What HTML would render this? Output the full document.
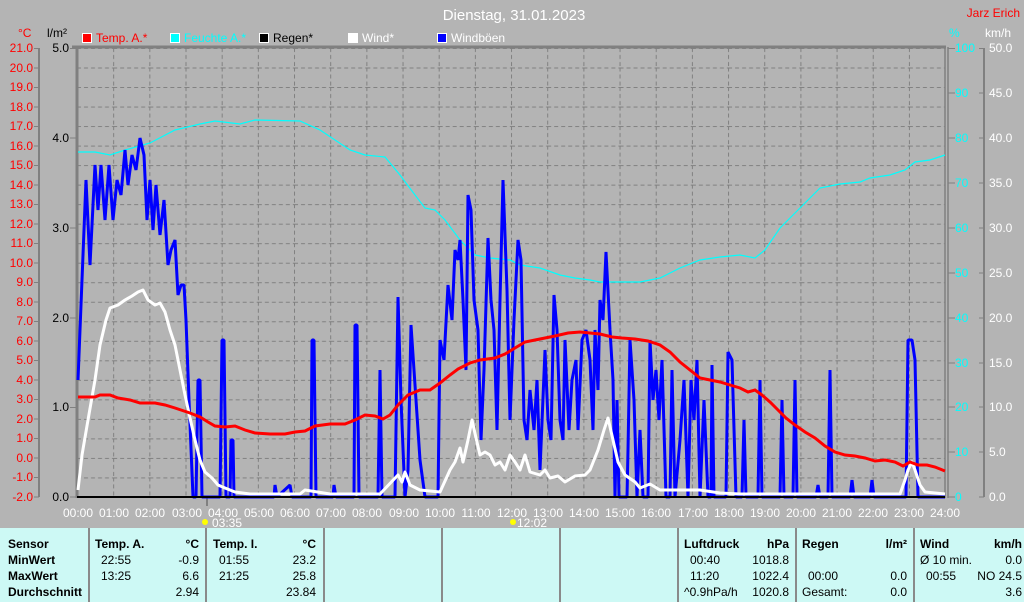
<!DOCTYPE html>
<html><head><meta charset="utf-8"><style>
body{margin:0;width:1024px;height:602px;overflow:hidden;background:#b4b4b4;font-family:"Liberation Sans",sans-serif}
svg{position:absolute;left:0;top:0}
.tb{position:absolute;left:0;top:528px;width:1024px;height:74px;background:#cdf9f5;font-size:12px;color:#000}
.c{position:absolute;top:0;height:74px;border-left:2px solid #8a8a8a}
.r{position:absolute;white-space:nowrap}
b{font-weight:bold}
</style></head><body>
<svg width="1024" height="528" viewBox="0 0 1024 528" font-family="Liberation Sans" font-size="12">
<defs>
<pattern id="g" x="77" y="48" width="36.17" height="19.52" patternUnits="userSpaceOnUse">
<line x1="0.5" y1="0" x2="0.5" y2="19.52" stroke="#808080" stroke-dasharray="4,3"/>
<line x1="0" y1="0.5" x2="36.17" y2="0.5" stroke="#808080" stroke-dasharray="4,3"/>
</pattern>
</defs>
<text x="514" y="20" fill="#fff" font-size="15" text-anchor="middle">Dienstag, 31.01.2023</text>
<text x="1020" y="17" fill="#f00" text-anchor="end">Jarz Erich</text>
<text x="18" y="37" fill="#f00">°C</text>
<text x="47" y="37" fill="#000">l/m²</text>
<text x="949" y="37" fill="#0ff">%</text>
<text x="985" y="37" fill="#fff">km/h</text>
<g font-size="12">
<rect x="82.5" y="33.5" width="9" height="9" fill="#f00" stroke="#fff"/><text x="96" y="42" fill="#f00">Temp. A.*</text>
<rect x="170.5" y="33.5" width="9" height="9" fill="#0ff" stroke="#fff"/><text x="184" y="42" fill="#0ff">Feuchte A.*</text>
<rect x="259.5" y="33.5" width="9" height="9" fill="#000" stroke="#fff"/><text x="273" y="42" fill="#000">Regen*</text>
<rect x="348.5" y="33.5" width="9" height="9" fill="#fff" stroke="#fff"/><text x="362" y="42" fill="#fff">Wind*</text>
<rect x="437.5" y="33.5" width="9" height="9" fill="#00f" stroke="#fff"/><text x="451" y="42" fill="#fff">Windböen</text>
</g>
<rect x="77" y="48" width="868" height="449" fill="url(#g)"/>
<line x1="39" y1="48" x2="39" y2="497" stroke="#808080" stroke-width="2"/>
<g fill="#f00" text-anchor="end">
<text x="33" y="52">21.0</text><text x="33" y="72">20.0</text><text x="33" y="91">19.0</text><text x="33" y="111">18.0</text><text x="33" y="130">17.0</text><text x="33" y="150">16.0</text><text x="33" y="169">15.0</text><text x="33" y="189">14.0</text><text x="33" y="208">13.0</text><text x="33" y="228">12.0</text><text x="33" y="247">11.0</text><text x="33" y="267">10.0</text><text x="33" y="286">9.0</text><text x="33" y="306">8.0</text><text x="33" y="325">7.0</text><text x="33" y="345">6.0</text><text x="33" y="364">5.0</text><text x="33" y="384">4.0</text><text x="33" y="403">3.0</text><text x="33" y="423">2.0</text><text x="33" y="442">1.0</text><text x="33" y="462">0.0</text><text x="33" y="481">-1.0</text><text x="33" y="501">-2.0</text>
</g>
<g stroke="#808080"><path d="M34 48.5h5M34 68h5M34 87.5h5M34 107h5M34 126.5h5M34 146h5M34 165.5h5M34 185h5M34 204.5h5M34 224h5M34 243.5h5M34 263h5M34 282.5h5M34 302h5M34 321.5h5M34 341h5M34 360.5h5M34 380h5M34 399.5h5M34 419h5M34 438.5h5M34 458h5M34 477.5h5M34 497h5"/>
<path d="M70 48.5h7M70 138h7M70 228h7M70 318h7M70 407.5h7M70 497h7"/></g>
<g fill="#000" text-anchor="end"><text x="69" y="52">5.0</text><text x="69" y="142">4.0</text><text x="69" y="232">3.0</text><text x="69" y="322">2.0</text><text x="69" y="411">1.0</text><text x="69" y="501">0.0</text></g>
<line x1="72" y1="47" x2="946" y2="47" stroke="#808080" stroke-width="3"/>
<line x1="77" y1="47" x2="77" y2="498" stroke="#808080" stroke-width="3"/>
<line x1="945" y1="47" x2="945" y2="498" stroke="#808080" stroke-width="1.5"/>
<line x1="948" y1="47" x2="948" y2="498" stroke="#808080" stroke-width="1.5"/>
<line x1="984" y1="48" x2="984" y2="497" stroke="#808080" stroke-width="2"/>
<g stroke="#808080"><path d="M948 48.5h7M948 93h7M948 138h7M948 183h7M948 228h7M948 273h7M948 318h7M948 363h7M948 407h7M948 452h7M948 497h7"/>
<path d="M979 48.5h5M979 93h5M979 138h5M979 183h5M979 228h5M979 273h5M979 318h5M979 363h5M979 407h5M979 452h5M979 497h5"/></g>
<g fill="#0ff"><text x="955" y="52">100</text><text x="955" y="97">90</text><text x="955" y="142">80</text><text x="955" y="187">70</text><text x="955" y="232">60</text><text x="955" y="277">50</text><text x="955" y="322">40</text><text x="955" y="367">30</text><text x="955" y="411">20</text><text x="955" y="456">10</text><text x="955" y="501">0</text></g>
<g fill="#fff"><text x="989" y="52">50.0</text><text x="989" y="97">45.0</text><text x="989" y="142">40.0</text><text x="989" y="187">35.0</text><text x="989" y="232">30.0</text><text x="989" y="277">25.0</text><text x="989" y="322">20.0</text><text x="989" y="367">15.0</text><text x="989" y="411">10.0</text><text x="989" y="456">5.0</text><text x="989" y="501">0.0</text></g>
<g fill="#fff" text-anchor="middle"><text x="78" y="517">00:00</text><text x="114" y="517">01:00</text><text x="150" y="517">02:00</text><text x="187" y="517">03:00</text><text x="223" y="517">04:00</text><text x="259" y="517">05:00</text><text x="295" y="517">06:00</text><text x="331" y="517">07:00</text><text x="367" y="517">08:00</text><text x="404" y="517">09:00</text><text x="440" y="517">10:00</text><text x="476" y="517">11:00</text><text x="512" y="517">12:00</text><text x="548" y="517">13:00</text><text x="584" y="517">14:00</text><text x="620" y="517">15:00</text><text x="656" y="517">16:00</text><text x="693" y="517">17:00</text><text x="729" y="517">18:00</text><text x="765" y="517">19:00</text><text x="801" y="517">20:00</text><text x="837" y="517">21:00</text><text x="873" y="517">22:00</text><text x="909" y="517">23:00</text><text x="945" y="517">24:00</text></g>
<line x1="207" y1="498" x2="207" y2="506" stroke="#808080" stroke-width="2"/>
<circle cx="205" cy="522" r="3" fill="#ff0"/><text x="212" y="527" fill="#fff">03:35</text>
<circle cx="513" cy="522" r="3" fill="#ff0"/><text x="517" y="527" fill="#fff">12:02</text>
<polyline fill="none" stroke="#0ff" stroke-width="1.2" points="78,152 95,152 110,155 125,150 150,143 175,130 200,124 215,121 240,124 255,120 300,121 320,130 350,150 365,155 385,157 400,175 415,195 425,208 435,210 445,220 460,240 475,255 490,258 510,260 520,265 540,268 560,275 575,278 590,280 600,282 620,282 640,282 660,278 680,268 700,260 720,257 740,255 755,258 765,250 780,228 800,208 820,188 840,184 860,182 870,178 890,175 905,170 915,162 930,160 945,155"/>
<polyline fill="none" stroke="#00f" stroke-width="3" stroke-linejoin="bevel" points="78,380 82,280 86,180 90,265 95,165 98,210 101,165 105,220 109,165 113,220 117,180 121,195 125,150 128,185 132,155 136,170 140,138 144,155 147,220 150,180 153,230 156,185 160,235 164,200 168,265 171,250 175,240 178,295 181,285 184,285 186,320 189,400 193,497 196,497 198,380 200,380 202,497 220,497 222,340 224,340 226,497 230,497 231,440 233,440 234,497 274,497 275,485 277,497 290,485 292,497 311,497 312,340 314,340 316,497 333,497 334,485 336,497 354,497 355,325 357,325 359,497 378,497 380,370 382,497 395,497 398,297 401,400 405,497 408,470 411,325 416,400 420,460 425,497 438,497 440,340 444,360 448,285 452,320 455,250 458,260 460,240 463,300 466,370 468,195 471,210 474,300 478,330 481,440 484,370 488,238 491,300 494,330 497,430 500,300 503,180 507,290 510,420 514,320 518,240 521,260 524,420 527,440 530,390 534,430 537,380 540,470 545,350 548,420 551,440 554,295 557,330 560,420 563,440 565,340 569,430 572,380 576,360 578,430 582,340 586,330 590,360 593,430 595,330 598,390 600,300 603,320 606,252 610,330 613,380 615,497 617,400 619,497 627,497 628,450 630,340 634,400 637,497 640,430 643,497 648,497 650,340 653,400 656,370 659,420 662,360 666,497 670,497 672,370 675,497 680,440 684,380 688,497 691,380 694,420 697,360 700,497 704,400 708,497 711,497 712,365 714,497 726,497 728,352 732,360 736,497 742,497 744,420 746,497 758,497 760,380 762,497 780,497 782,400 784,497 793,497 795,380 797,497 816,497 818,485 820,497 828,497 830,370 832,497 850,497 852,480 854,497 870,497 872,480 874,497 906,497 908,340 912,340 915,360 918,497 945,497"/>
<polyline fill="none" stroke="#fff" stroke-width="3" stroke-linejoin="round" points="78,490 82,455 88,420 95,380 100,345 106,320 110,308 118,305 125,300 132,296 138,292 143,290 148,300 155,305 160,303 165,312 170,330 175,345 180,370 185,395 190,418 195,440 200,460 205,472 212,478 218,485 225,488 235,492 250,494 300,494 305,490 330,494 380,494 398,475 402,482 405,472 410,485 420,490 440,492 450,470 455,462 460,448 463,462 468,440 472,420 476,438 480,455 485,452 490,455 495,465 500,462 505,470 510,455 515,462 520,470 525,455 530,472 540,475 545,470 550,478 558,476 565,482 575,476 585,475 590,470 598,450 604,430 608,418 613,440 618,462 625,475 635,482 640,488 650,484 660,490 680,490 700,490 720,493 740,494 760,494 800,494 900,494 905,480 908,470 912,462 915,470 920,485 925,492 945,494"/>
<polyline fill="none" stroke="#f00" stroke-width="3" points="78,397 95,397 100,395 110,395 118,398 130,400 140,403 155,403 165,405 175,408 190,413 200,417 208,422 215,426 225,427 235,426 245,430 255,433 270,434 285,434 295,432 305,431 315,426 330,424 345,424 355,420 365,415 375,416 383,419 390,415 398,405 408,395 420,390 430,390 440,383 450,375 458,369 470,363 480,360 495,358 505,354 515,348 525,342 535,340 545,338 555,336 568,333 580,332 590,333 600,334 612,337 622,338 635,339 648,341 660,345 670,352 680,362 690,370 700,378 710,380 720,382 730,385 740,388 748,392 755,390 762,395 770,402 778,410 786,418 795,425 805,432 815,438 825,446 835,452 845,455 855,456 865,458 875,461 885,460 895,462 903,466 910,462 918,465 927,465 935,467 945,471"/>
<line x1="77" y1="497" x2="945" y2="497" stroke="#000" stroke-width="2"/>
</svg>
<div class="tb">
<div class="c" style="left:88px"></div><div class="c" style="left:205px"></div><div class="c" style="left:323px"></div><div class="c" style="left:441px"></div><div class="c" style="left:559px"></div><div class="c" style="left:677px"></div><div class="c" style="left:795px"></div><div class="c" style="left:913px"></div>
<div class="r" style="left:8px;top:9px"><b>Sensor</b></div>
<div class="r" style="left:8px;top:25px"><b>MinWert</b></div>
<div class="r" style="left:8px;top:41px"><b>MaxWert</b></div>
<div class="r" style="left:8px;top:57px"><b>Durchschnitt</b></div>
<div class="r" style="left:95px;top:9px"><b>Temp. A.</b></div><div class="r" style="right:825px;top:9px"><b>°C</b></div>
<div class="r" style="left:101px;top:25px">22:55</div><div class="r" style="right:825px;top:25px">-0.9</div>
<div class="r" style="left:101px;top:41px">13:25</div><div class="r" style="right:825px;top:41px">6.6</div>
<div class="r" style="right:825px;top:57px">2.94</div>
<div class="r" style="left:213px;top:9px"><b>Temp. I.</b></div><div class="r" style="right:708px;top:9px"><b>°C</b></div>
<div class="r" style="left:219px;top:25px">01:55</div><div class="r" style="right:708px;top:25px">23.2</div>
<div class="r" style="left:219px;top:41px">21:25</div><div class="r" style="right:708px;top:41px">25.8</div>
<div class="r" style="right:708px;top:57px">23.84</div>
<div class="r" style="left:684px;top:9px"><b>Luftdruck</b></div><div class="r" style="right:235px;top:9px"><b>hPa</b></div>
<div class="r" style="left:690px;top:25px">00:40</div><div class="r" style="right:235px;top:25px">1018.8</div>
<div class="r" style="left:690px;top:41px">11:20</div><div class="r" style="right:235px;top:41px">1022.4</div>
<div class="r" style="left:684px;top:57px">^0.9hPa/h</div><div class="r" style="right:235px;top:57px">1020.8</div>
<div class="r" style="left:802px;top:9px"><b>Regen</b></div><div class="r" style="right:117px;top:9px"><b>l/m²</b></div>
<div class="r" style="left:808px;top:41px">00:00</div><div class="r" style="right:117px;top:41px">0.0</div>
<div class="r" style="left:802px;top:57px">Gesamt:</div><div class="r" style="right:117px;top:57px">0.0</div>
<div class="r" style="left:920px;top:9px"><b>Wind</b></div><div class="r" style="right:2px;top:9px"><b>km/h</b></div>
<div class="r" style="left:920px;top:25px">Ø 10 min.</div><div class="r" style="right:2px;top:25px">0.0</div>
<div class="r" style="left:926px;top:41px">00:55</div><div class="r" style="right:2px;top:41px">NO 24.5</div>
<div class="r" style="right:2px;top:57px">3.6</div>
</div>
</body></html>
